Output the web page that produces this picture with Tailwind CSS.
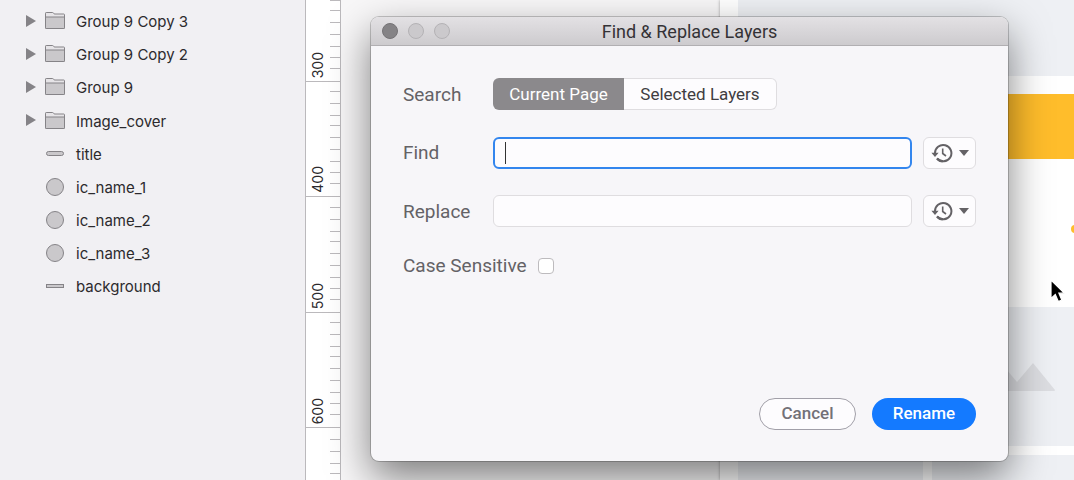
<!DOCTYPE html>
<html lang="en">
<head>
<meta charset="utf-8">
<meta name="viewport" content="width=device-width, initial-scale=1">
<title>Find &amp; Replace Layers</title>
<script src="https://cdn.jsdelivr.net/npm/@tailwindcss/browser@4"></script>
</head>
<body class="bg-[#f8f7f8] font-['Inter','Liberation_Sans',sans-serif] text-[#2c2a2d]">
<svg class="hidden" aria-hidden="true">
  <symbol id="folder" viewBox="0 0 20 17">
    <path d="M.5 3V1.2Q.5.5 1.2.5H7.500Q8.300.5 8.700 1.200L9.200 2H18.800Q19.500 2 19.500 2.700V15.800Q19.500 16.500 18.800 16.500H1.200Q.5 16.500.5 15.800Z" fill="#e6e4e7" stroke="#858387"/>
    <path d="M.5 5H19.500V15.800Q19.500 16.500 18.800 16.500H1.200Q.5 16.500.5 15.800Z" fill="#cac8cb" stroke="#858387"/>
  </symbol>
  <symbol id="ticks" viewBox="0 0 10 116">
    <path d="M0 11.500H10M0 23.500H10M0 35.500H10M0 45.500H10M0 57.500H10M0 69.500H10M0 81.500H10M0 92.500H10M0 103.500H10" stroke="#bbb9bc"/>
  </symbol>
  <symbol id="history" viewBox="0 0 22 20">
    <path d="M4 10.500A8.200 8.200 0 1 1 6 15.500" fill="none" stroke="#646266" stroke-width="2"/>
    <path d="M6 15.500Q8.500 18.300 12 18.300" fill="none" stroke="#646266" stroke-width="2"/>
    <path d="M.4 9.700H7.600L4 14Z" fill="#646266"/>
    <path d="M11.700 5.500V10.500L15 13" fill="none" stroke="#646266" stroke-width="1.600"/>
  </symbol>
</svg>

<div class="relative flex h-screen overflow-hidden">
  <aside class="w-[305px] shrink-0 bg-[#f1f0f3] pt-[5px]" aria-label="Layers">
    <ul class="text-[15px]">
      <li class="flex h-[33px] items-center"><svg class="mb-0.5 ml-[26px] h-3 w-[10px]" viewBox="0 0 10 12"><path d="M0 0L10 6L0 12Z" fill="#858387"/></svg><svg class="mb-0.5 ml-[9px] h-[17px] w-5"><use href="#folder"/></svg><span class="ml-[11px] pt-0.5">Group 9 Copy 3</span></li>
      <li class="flex h-[33px] items-center"><svg class="mb-0.5 ml-[26px] h-3 w-[10px]" viewBox="0 0 10 12"><path d="M0 0L10 6L0 12Z" fill="#858387"/></svg><svg class="mb-0.5 ml-[9px] h-[17px] w-5"><use href="#folder"/></svg><span class="ml-[11px] pt-0.5">Group 9 Copy 2</span></li>
      <li class="flex h-[33px] items-center"><svg class="mb-0.5 ml-[26px] h-3 w-[10px]" viewBox="0 0 10 12"><path d="M0 0L10 6L0 12Z" fill="#858387"/></svg><svg class="mb-0.5 ml-[9px] h-[17px] w-5"><use href="#folder"/></svg><span class="ml-[11px] pt-0.5">Group 9</span></li>
      <li class="flex h-[34px] items-center"><svg class="mb-0.5 ml-[26px] h-3 w-[10px]" viewBox="0 0 10 12"><path d="M0 0L10 6L0 12Z" fill="#858387"/></svg><svg class="mb-0.5 ml-[9px] h-[17px] w-5"><use href="#folder"/></svg><span class="ml-[11px] pt-0.5">Image_cover</span></li>
      <li class="flex h-[33px] items-center"><span class="mb-0.5 ml-[46px] h-[5px] w-[18px] rounded-full border border-[#858387] bg-[#cac8cb]"></span><span class="ml-3 pt-0.5">title</span></li>
      <li class="flex h-[33px] items-center"><span class="mb-0.5 ml-[46px] h-[18px] w-[18px] rounded-full border border-[#858387] bg-[#cac8cb]"></span><span class="ml-3 pt-0.5">ic_name_1</span></li>
      <li class="flex h-[33px] items-center"><span class="mb-0.5 ml-[46px] h-[18px] w-[18px] rounded-full border border-[#858387] bg-[#cac8cb]"></span><span class="ml-3 pt-0.5">ic_name_2</span></li>
      <li class="flex h-[33px] items-center"><span class="mb-0.5 ml-[46px] h-[18px] w-[18px] rounded-full border border-[#858387] bg-[#cac8cb]"></span><span class="ml-3 pt-0.5">ic_name_3</span></li>
      <li class="flex h-[33px] items-center"><span class="mb-0.5 ml-[46px] h-1 w-[18px] border border-[#858387] bg-[#cac8cb]"></span><span class="ml-3 pt-0.5">background</span></li>
    </ul>
  </aside>

  <div class="flex w-9 shrink-0 flex-col border-x border-[#bbb9bc] bg-white text-sm leading-5" aria-label="Ruler">
    <div class="flex h-[82px] shrink-0 items-end justify-between overflow-hidden border-b border-[#bbb9bc] pl-[2px]"><span class="mb-[3px] rotate-180 [writing-mode:vertical-rl]">300</span><svg class="h-[116px] w-[10px] shrink-0"><use href="#ticks"/></svg></div>
    <div class="flex h-[115px] shrink-0 items-end justify-between overflow-hidden border-b border-[#bbb9bc] pl-[2px]"><span class="mb-[3px] rotate-180 [writing-mode:vertical-rl]">400</span><svg class="h-[116px] w-[10px] shrink-0"><use href="#ticks"/></svg></div>
    <div class="flex h-[116px] shrink-0 items-end justify-between overflow-hidden border-b border-[#bbb9bc] pl-[2px]"><span class="mb-[3px] rotate-180 [writing-mode:vertical-rl]">500</span><svg class="h-[116px] w-[10px] shrink-0"><use href="#ticks"/></svg></div>
    <div class="flex h-[115px] shrink-0 items-end justify-between overflow-hidden border-b border-[#bbb9bc] pl-[2px]"><span class="mb-[3px] rotate-180 [writing-mode:vertical-rl]">600</span><svg class="h-[116px] w-[10px] shrink-0"><use href="#ticks"/></svg></div>
    <div class="flex flex-1 justify-end overflow-hidden"><svg class="h-[116px] w-[10px] shrink-0"><use href="#ticks"/></svg></div>
  </div>

  <div class="flex min-w-0 flex-1 pl-[379px]">
    <div class="flex flex-1 flex-col bg-white pl-[18px] shadow-[0_0_3px_rgba(0,0,0,0.35)]">
      <div class="h-[76px] shrink-0 bg-[#eef0f4]"></div>
      <div class="mt-[18px] h-[65px] shrink-0 bg-[#ffbd2b]"></div>
      <div class="flex h-[148px] shrink-0 items-center justify-end overflow-hidden"><span class="-mr-[5px] mb-2 h-2 w-2 rounded-full bg-[#ffbd2b]"></span></div>
      <div class="flex h-[139px] shrink-0 items-center justify-end bg-[#eef0f4] pr-[19px]"><svg class="mb-0.5 h-[30px] w-[84px]" viewBox="0 0 84 30"><path d="M0 30L30 2L46 21L62 2L84 29Q84 30 83 30Z" fill="#dcdde1"/></svg></div>
      <div class="mt-[9px] flex flex-1 gap-[9px]"><div class="w-[185px] bg-[#eef0f4]"></div><div class="flex-1 bg-[#eef0f4]"></div></div>
    </div>
  </div>

  <section role="dialog" aria-labelledby="dialog-title" class="absolute top-[17px] right-[66px] left-[371px] rounded-lg bg-[#f7f6f9] font-['Roboto','Liberation_Sans',sans-serif] shadow-[0_0_0_1px_rgba(0,0,0,0.2),0_16px_40px_rgba(0,0,0,0.5)]">
    <header class="grid h-[29px] grid-cols-[1fr_auto_1fr] items-center rounded-t-lg border-b border-[#b1afb2] bg-linear-to-b from-[#e3e1e4] to-[#cdcbce] px-[11px]">
      <div class="flex gap-[10px]">
        <button type="button" aria-label="Close" class="h-4 w-4 rounded-full border border-[#757376] bg-[#858386]"></button>
        <button type="button" aria-label="Minimize" class="h-4 w-4 rounded-full border border-[#b4b2b5] bg-[#cbc9cc]"></button>
        <button type="button" aria-label="Zoom" class="h-4 w-4 rounded-full border border-[#b4b2b5] bg-[#cbc9cc]"></button>
      </div>
      <h1 id="dialog-title" class="pt-0.5 text-lg leading-6 text-[#343236]">Find &amp; Replace Layers</h1>
    </header>
    <form class="px-8 pt-8 pb-[31px] text-[19px] text-[#646266]">
      <div class="flex items-center">
        <span id="scope" class="w-[90px] pt-0.5">Search</span>
        <div class="flex h-8 text-[17px]" role="group" aria-labelledby="scope">
          <button type="button" aria-pressed="true" class="w-[131px] rounded-l-md bg-[#8b898c] pt-0.5 text-white">Current Page</button>
          <button type="button" aria-pressed="false" class="w-[153px] rounded-r-md border border-l-0 border-[#dfdde0] bg-[#fdfcfe] pt-0.5 text-[#3f3d41]">Selected Layers</button>
        </div>
      </div>
      <div class="mt-[27px] flex items-center">
        <label for="find" class="w-[90px]">Find</label>
        <div class="relative flex-1">
          <input id="find" type="text" class="block h-8 w-full rounded-md border-2 border-[#3386ee] bg-[#fdfcfe] px-3 outline-none">
          <span class="absolute top-[5px] left-3 h-[22px] w-px bg-[#333]"></span>
        </div>
        <button type="button" aria-label="Find history" class="ml-[11px] flex h-8 w-[53px] items-center justify-center gap-[6px] rounded-md border border-[#dfdde0] bg-[#fdfcfe]"><svg class="h-5 w-[22px]"><use href="#history"/></svg><svg class="h-[6px] w-[10px]" viewBox="0 0 10 6"><path d="M0 0H10L5 6Z" fill="#646266"/></svg></button>
      </div>
      <div class="mt-[26px] flex items-center">
        <label for="replace" class="w-[90px] pt-0.5">Replace</label>
        <div class="flex-1">
          <input id="replace" type="text" class="block h-8 w-full rounded-md border border-[#dfdde0] bg-[#fdfcfe] px-3 outline-none">
        </div>
        <button type="button" aria-label="Replace history" class="ml-[11px] flex h-8 w-[53px] items-center justify-center gap-[6px] rounded-md border border-[#dfdde0] bg-[#fdfcfe]"><svg class="h-5 w-[22px]"><use href="#history"/></svg><svg class="h-[6px] w-[10px]" viewBox="0 0 10 6"><path d="M0 0H10L5 6Z" fill="#646266"/></svg></button>
      </div>
      <div class="mt-[23px] flex h-8 items-center gap-[11px]">
        <label for="case">Case Sensitive</label>
        <input id="case" type="checkbox" class="h-4 w-4 appearance-none rounded-sm border border-[#bdbbbe] bg-white">
      </div>
      <div class="mt-[116px] flex justify-end gap-4 text-[17px] font-medium">
        <button type="button" class="h-8 w-[97px] rounded-full border border-[#a19fa8] bg-[#fdfcfe] text-[#737178]">Cancel</button>
        <button type="submit" class="h-8 w-[104px] rounded-full bg-[#147aff] text-white">Rename</button>
      </div>
    </form>
  </section>

  <svg class="absolute top-[279px] right-[9px] h-6 w-[15px]" viewBox="0 0 15 24" aria-hidden="true"><path d="M1 1V19.500L5.300 15.500L8.300 22.500L11.800 21L8.900 14.200H14.500Z" fill="#000" stroke="#fff" stroke-width="1.200"/></svg>
</div>
</body>
</html>
